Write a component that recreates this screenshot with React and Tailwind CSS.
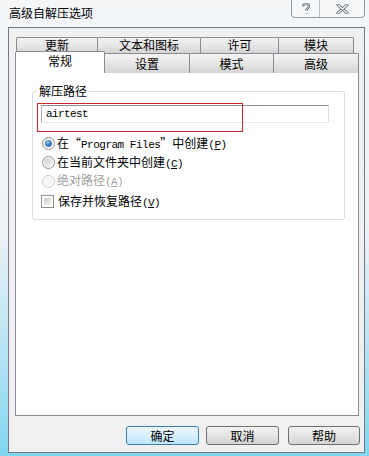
import React from "react";

const cjk = { fontFamily: '"Noto Sans CJK SC", "Noto Sans", sans-serif' };
const mono = { fontFamily: '"Liberation Mono", "Noto Sans CJK SC", monospace' };

function Mnemonic({ k }) {
  return (
    <span style={mono} className="text-[11px] tracking-[-0.6px]">
      (<span className="underline underline-offset-[1px]">{k}</span>)
    </span>
  );
}

function Radio({ checked, disabled }) {
  const id = `rg${checked ? 1 : 0}${disabled ? 1 : 0}`;
  return (
    <svg width="13" height="13" viewBox="0 0 13 13" className="shrink-0">
      <defs>
        <linearGradient id={id} x1="0" y1="0" x2="1" y2="1">
          <stop offset="0" stopColor={disabled ? "#f2f2f2" : "#cfcfcf"} />
          <stop offset="1" stopColor={disabled ? "#fafafa" : "#f6f6f6"} />
        </linearGradient>
        <radialGradient id="rdot" cx="0.4" cy="0.35" r="0.7">
          <stop offset="0" stopColor="#9fd3f5" />
          <stop offset="0.5" stopColor="#3b86cc" />
          <stop offset="1" stopColor="#1b4f8f" />
        </radialGradient>
      </defs>
      <circle cx="6.5" cy="6.5" r="6" fill="#fff" stroke={disabled ? "#c8c8c8" : "#8e8f8f"} />
      <circle cx="6.5" cy="6.5" r="4.5" fill={`url(#${id})`} />
      {checked ? <circle cx="6.5" cy="6.5" r="3.3" fill="url(#rdot)" /> : null}
    </svg>
  );
}

function Checkbox() {
  return (
    <div className="h-[13px] w-[13px] shrink-0 border border-[#8e8f8f] bg-white p-[2px]">
      <div className="h-full w-full bg-gradient-to-br from-[#cbcbcb] to-[#f4f4f4]" />
    </div>
  );
}

const tabBack = "flex items-start justify-center border border-b-0 border-[#898c95] rounded-t-[2px] bg-gradient-to-b from-[#f3f3f3] via-[#e6e6e6] to-[#d4d4d4] text-[12px] text-black";

export default function App() {
  const rowTabs = [
    { label: "更新", w: "w-[82px]" },
    { label: "文本和图标", w: "w-[104px]" },
    { label: "许可", w: "w-[79px]" },
    { label: "模块", w: "w-[76px]" },
  ];
  const frontTabs = [
    { label: "设置", w: "w-[86px]" },
    { label: "模式", w: "w-[85px]" },
    { label: "高级", w: "w-[86px]" },
  ];

  return (
    <div
      style={cjk}
      className="relative h-[456px] w-[369px] overflow-hidden bg-gradient-to-b from-[#f4f6f8] via-[#eef2f5] to-[#7fd6ef] text-black"
    >
      {/* title bar */}
      <div className="flex h-[27px] items-start justify-between">
        <div className="pl-[9px] pt-[6px] text-[12px] leading-[14px] text-black">高级自解压选项</div>
        <div className="mr-[4px] flex h-[18px] overflow-hidden rounded-b-[4px] border border-t-0 border-[#8f9aa6] bg-[#f6f8fa]">
          <div className="flex w-[28px] items-center justify-center border-r border-[#b5bec8]">
            <svg width="10" height="12" viewBox="0 0 10 12">
              <path
                d="M2 3.5 C2 1.5 3.5 1 5 1 C6.8 1 8 2 8 3.5 C8 5 6 5.5 5.5 6.5 L5.5 7.8 M5.5 10 L5.5 10.8"
                fill="none"
                stroke="#5c6670"
                strokeWidth="2.2"
              />
              <path
                d="M2 3.5 C2 1.5 3.5 1 5 1 C6.8 1 8 2 8 3.5 C8 5 6 5.5 5.5 6.5 L5.5 7.8 M5.5 10 L5.5 10.8"
                fill="none"
                stroke="#ffffff"
                strokeWidth="0.8"
              />
            </svg>
          </div>
          <div className="flex w-[44px] items-center justify-center">
            <svg width="13" height="10" viewBox="0 0 13 10">
              <path d="M2 1 L11 9 M11 1 L2 9" stroke="#5c6670" strokeWidth="3" strokeLinecap="round" />
              <path d="M2 1 L11 9 M11 1 L2 9" stroke="#ffffff" strokeWidth="1.2" strokeLinecap="round" />
            </svg>
          </div>
        </div>
      </div>

      {/* client area */}
      <div className="ml-[8px] h-[426px] w-[357px] border border-[#6f7a86] bg-[#f0f0f0]">
        <div className="pl-[6px] pt-[9px]">
          <div className="ml-[1px] flex h-[16px]">
            {rowTabs.map((t, i) => (
              <div key={t.label} className={`${tabBack} ${t.w} ${i ? "-ml-px" : ""} h-[16px] pt-[1px] leading-[12px]`}>
                {t.label}
              </div>
            ))}
          </div>
          <div className="relative z-10 flex h-[19px]">
            <div className="relative z-10 -mt-[2px] flex h-[22px] w-[90px] justify-center rounded-t-[2px] border border-b-0 border-[#898c95] bg-white pt-[2px] text-[12px] leading-[13px]">
              常规
            </div>
            {frontTabs.map((t) => (
              <div key={t.label} className={`${tabBack} ${t.w} -ml-px h-[20px] pt-[3px] leading-[14px]`}>
                {t.label}
              </div>
            ))}
          </div>

          {/* panel */}
          <div className="-mt-px h-[345px] w-[344px] border border-[#898c95] bg-white pl-[16px] pt-[19px]">
            <div className="relative w-[313px] rounded-[3px] border border-[#d5dfe5] pb-[8px] pl-[8px] pr-[14px] pt-[13px]">
              <div className="absolute -top-[8px] left-[4px] bg-white px-[2px] text-[12px] leading-[14px]">解压路径</div>
              <div className="flex h-[18px] w-[288px] items-center border border-[#abadb3] border-t-[#8e8f8f] border-r-[#dbdfe6] border-b-[#e3e9ef] pl-[4px]">
                <span style={mono} className="text-[11px] tracking-[-0.6px]">airtest</span>
              </div>
              <div className="mt-[11px] flex h-[19px] items-center gap-[2px] pl-[1px] text-[12px] leading-[14px]">
                <Radio checked />
                <span className="whitespace-nowrap">
                  在“<span style={mono} className="text-[11px] tracking-[-0.5px]">Program Files</span>”中创建
                  <Mnemonic k="P" />
                </span>
              </div>
              <div className="flex h-[19px] items-center gap-[2px] pl-[1px] text-[12px] leading-[14px]">
                <Radio />
                <span className="whitespace-nowrap">
                  在当前文件夹中创建
                  <Mnemonic k="C" />
                </span>
              </div>
              <div className="flex h-[18px] items-center gap-[2px] pl-[1px] text-[12px] leading-[14px] text-[#a0a0a0]">
                <Radio disabled />
                <span className="whitespace-nowrap">
                  绝对路径
                  <Mnemonic k="A" />
                </span>
              </div>
              <div className="mt-[2px] flex h-[19px] items-center gap-[4px] text-[12px] leading-[14px]">
                <Checkbox />
                <span className="whitespace-nowrap">
                  保存并恢复路径
                  <Mnemonic k="V" />
                </span>
              </div>
            </div>
          </div>
        </div>

        {/* buttons */}
        <div className="mt-[10px] flex pl-[117px] text-[12px] leading-[14px]">
          <button className="flex h-[19px] w-[73px] items-center justify-center rounded-[3px] border border-[#3c7fb1] bg-gradient-to-b from-[#eaf6fd] via-[#d9f0fc] to-[#bee6fd]">
            确定
          </button>
          <button className="ml-[7px] flex h-[19px] w-[73px] items-center justify-center rounded-[3px] border border-[#707070] bg-gradient-to-b from-[#f2f2f2] via-[#e5e5e5] to-[#d2d2d2]">
            取消
          </button>
          <button className="ml-[9px] flex h-[19px] w-[72px] items-center justify-center rounded-[3px] border border-[#707070] bg-gradient-to-b from-[#f2f2f2] via-[#e5e5e5] to-[#d2d2d2]">
            帮助
          </button>
        </div>
      </div>

      {/* red annotation box */}
      <div className="absolute left-[37px] top-[103px] h-[29px] w-[206px] border border-[#c8252c]" />
    </div>
  );
}
